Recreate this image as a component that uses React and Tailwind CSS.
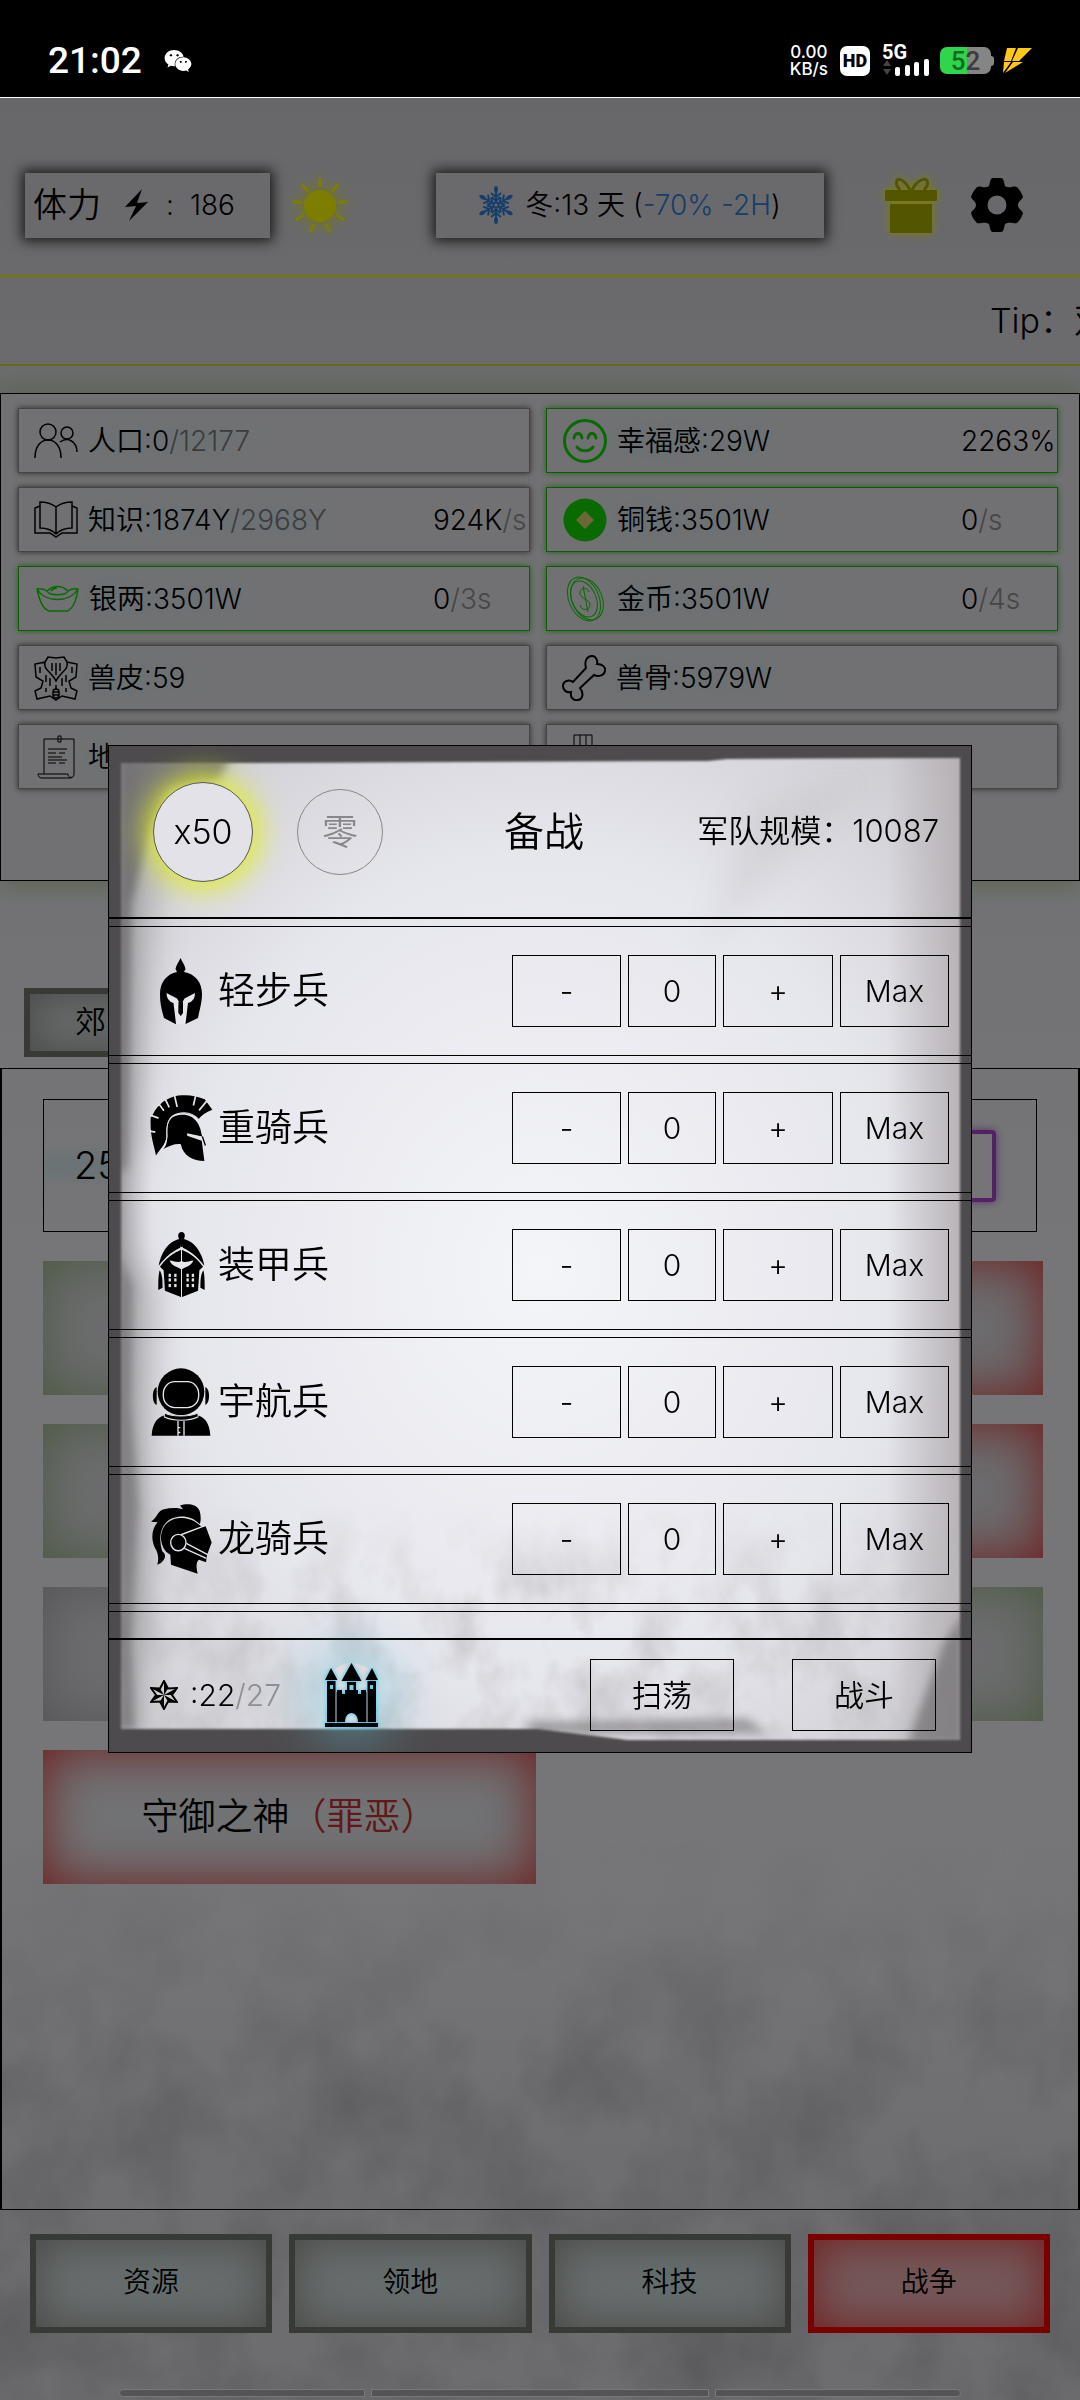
import React from 'react';
import { FaWeixin } from 'react-icons/fa';

const LightInfantryIcon = () => (
  <svg viewBox="0 0 42 66" className="w-[42px] h-[66px]" aria-hidden="true">
    <path d="M20.500 0C22 4 25 7 25.500 11L24 14C35 16 42 24 42 36C42 44 40 50 38 60L25.500 66H15.500L4 60C1 50 0 44 0 36C0 24 7 16 17 14L15.500 11C16 7 19 4 20.500 0Z" />
    <path fill="#e6e6ec" d="M6.500 35L17 40.500L19 44L18.500 54L20.500 57.500L23 54L22.500 44L24.500 40.500L35 35C35 41 32 44 28 45L25.500 66H16L13.500 45C10 44 6.500 41 6.500 35Z" />
    <path d="M18.500 44H23V55L20.800 58L18.500 55Z" />
  </svg>
);

const HeavyCavalryIcon = () => (
  <svg viewBox="150 96 190 188" preserveAspectRatio="none" className="w-[63px] h-[66px]" aria-hidden="true">
    <path d="M168 268C160 230 150 215 152 160C156 155 160 150 165 140C175 128 185 118 195 112C215 100 235 96 252 97C270 96 290 99 315 108L338 138C318 145 305 155 296 165C280 148 255 143 230 150C205 158 197 180 200 215C198 235 185 245 168 268Z" />
    <path d="M190 250C203 240 203 215 202 200C200 165 220 152 248 152C285 152 302 180 306 210L308 214L262 205V212L306 226L314 284C280 283 250 270 243 236C225 234 210 240 190 250Z" />
    <path d="M308 214L317 240" stroke="#000" strokeWidth="4" />
    <path d="M150 153L176 162M176 120L192 141M195 106L208 131M224 98L232 130M288 96L281 126M324 110L298 140M150 199L166 202" stroke="#e6e6ec" strokeWidth="5" />
    <path d="M296 165C280 148 255 143 230 150C205 158 199 180 201 215C199 235 190 245 184 252" fill="none" stroke="#e6e6ec" strokeWidth="3" />
  </svg>
);

const ArmoredIcon = () => (
  <svg viewBox="175 481 142 188" preserveAspectRatio="none" className="w-[47px] h-[66px]" aria-hidden="true">
    <path d="M243 500C210 505 185 535 177 577C195 555 215 538 242 526Z" />
    <path d="M249 500C282 505 307 535 315 577C297 555 277 538 250 526Z" />
    <path d="M246 531C225 541 203 550 181 580L192 590L196 648L246 667L296 648L300 590L311 580C289 550 267 541 246 531Z" />
    <path d="M180 590C190 605 188 625 189 640L176 646C176 620 176 605 180 590ZM312 590C302 605 304 625 303 640L316 646C316 620 316 605 312 590Z" />
    <path d="M246 481C254 481 258 488 255 496L249 524H243L237 496C234 488 238 481 246 481Z" />
    <path d="M246 527V667" stroke="#e6e6ec" strokeWidth="3" />
    <g fill="#e6e6ec">
      <path d="M210 562C225 563 236 571 246 563C256 571 267 563 282 562C276 577 260 580 246 587C232 580 216 577 210 562Z" />
      {[600, 613, 629].map((y) => (
        <g key={y}>
          <rect x="207" y={y} width="7" height="9" />
          <rect x="224" y={y} width="7" height="9" />
          <rect x="261" y={y} width="7" height="9" />
          <rect x="277" y={y} width="7" height="9" />
        </g>
      ))}
    </g>
  </svg>
);

const AstronautIcon = () => (
  <svg viewBox="156 860 180 194" preserveAspectRatio="none" className="w-[60px] h-[68px]" aria-hidden="true">
    <ellipse cx="246" cy="928" rx="70" ry="67" />
    <path d="M173 915C158 918 158 962 173 965ZM319 915C334 918 334 962 319 965Z" />
    <rect x="193" y="899" width="106" height="74" rx="34" fill="none" stroke="#e6e6ec" strokeWidth="4" />
    <path d="M158 1053C160 1015 178 998 200 994C225 1012 268 1012 292 994C315 998 332 1015 334 1053Z" />
    <path d="M196 988C220 1000 272 1000 297 988V1000C270 1012 222 1012 196 1000Z" stroke="#e6e6ec" strokeWidth="3" />
    <path d="M237 1011V1053M255 1011V1053M237 1030H244M237 1044H244" stroke="#e6e6ec" strokeWidth="4" />
  </svg>
);

const DragoonIcon = () => (
  <svg viewBox="156 1242 183 196" preserveAspectRatio="none" className="w-[61px] h-[70px]" aria-hidden="true">
    <path d="M156 1292C175 1280 175 1262 195 1257C215 1252 235 1252 252 1257L243 1246C265 1240 300 1240 304 1270C306 1285 305 1292 302 1298C275 1272 235 1272 210 1287C183 1305 178 1340 190 1375C207 1385 195 1405 175 1412C180 1395 178 1380 168 1365C155 1340 158 1310 176 1293Z" />
    <path d="M186 1335C188 1295 220 1280 250 1281C275 1282 295 1293 308 1306L320 1304L338 1350L324 1385L321 1405L300 1398C290 1405 292 1420 296 1437L216 1412L214 1384C195 1375 186 1355 186 1335Z" />
    <g fill="none" stroke="#e6e6ec" strokeWidth="4">
      <circle cx="238" cy="1350" r="23" />
      <path d="M246 1328L320 1302M262 1352L326 1384M256 1366L322 1394" />
    </g>
  </svg>
);

const CastleIcon = () => (
  <svg viewBox="0 0 53 64" className="w-[53px] h-[64px] drop-shadow-[0_0_2px_#22c4ee]" aria-hidden="true">
    <path d="M26.500 0L36.500 18H16.500ZM6 5L12.500 17H0ZM47 5L53 17H40.500Z" />
    <path fillRule="evenodd" d="M2 18H10.500V29H12V27H17V31H20V27H22V19H31V27H33V31H36V27H41V29H42.500V18H51V59H33C33 47 20 47 20 59H2ZM5 22V26H8V22ZM45 22V26H48V22ZM24.500 22V27H28.500V22Z" />
    <path d="M11 29V59M42 29V59" stroke="#bcd8e2" strokeWidth="1" />
    <rect y="60" width="53" height="4" />
  </svg>
);

const StarIcon = () => (
  <svg viewBox="0 0 28 30" className="w-[28px] h-[30px]" aria-hidden="true">
    <path d="M14 1L18 8.500L27 8L22 15L27 22L18 21.500L14 29L10 21.500L1 22L6 15L1 8L10 8.500Z" fill="none" stroke="#000" strokeWidth="2" />
    <path d="M14 15V1L18 8.500ZM14 15L27 8L22 15ZM14 15L27 22L18 21.500ZM14 15V29L10 21.500ZM14 15L1 22L6 15ZM14 15L1 8L10 8.500Z" />
  </svg>
);

const SunIcon = () => (
  <svg viewBox="0 0 56 56" className="w-[56px] h-[56px] drop-shadow-[0_0_6px_#f0f000]" aria-hidden="true">
    <circle cx="28" cy="29" r="16" fill="#fbfb00" />
    <g stroke="#fbfb00" strokeWidth="3">
      {[0, 40, 80, 120, 160, 200, 240, 280, 320].map((a) => (
        <path key={a} d="M28 1V10" transform={`rotate(${a} 28 29)`} />
      ))}
    </g>
  </svg>
);

const SnowIcon = () => (
  <svg viewBox="0 0 34 38" className="mr-3 w-[34px] h-[38px]" fill="none" stroke="#2e7bd6" strokeWidth="2" aria-hidden="true">
    {[0, 60, 120, 180, 240, 300].map((a) => (
      <g key={a} transform={`rotate(${a} 17 19)`}>
        <path d="M17 16V5M12 7L17 11L22 7M13 11L17 15L21 11" />
        <ellipse cx="17" cy="3.500" rx="2" ry="3.500" fill="#2e7bd6" stroke="none" />
      </g>
    ))}
    <circle cx="17" cy="19" r="2.500" />
  </svg>
);

const GiftIcon = () => (
  <svg viewBox="0 0 52 56" className="w-[52px] h-[56px] drop-shadow-[0_0_4px_#ffff00]" aria-hidden="true">
    <path d="M25 13C18 0 9 -1 12 9L15 13M27 13C34 0 45 -1 42 9L39 13" fill="none" stroke="#a8aa00" strokeWidth="3" />
    <rect y="13" width="52" height="11" rx="1" fill="#a8aa00" />
    <rect x="5" y="27" width="42" height="29" rx="1" fill="#a8aa00" />
  </svg>
);

const GearIcon = () => (
  <svg viewBox="0 0 52 54" className="w-[52px] h-[54px]" aria-hidden="true">
    <path fillRule="evenodd" d="M22 0H30C33 0 33 5 34 8C38 11 43 7 46 9C49 12 51 16 52 19C51 22 47 23 47 27C47 31 51 32 52 35C51 39 49 42 46 45C43 46 38 43 34 46C33 49 33 54 30 54H22C19 54 19 49 18 46C14 43 9 46 6 45C3 42 1 39 0 35C1 32 5 31 5 27C5 23 1 22 0 19C1 16 3 12 6 9C9 7 14 11 18 8C19 5 19 0 22 0ZM26 17.500A9.500 9.500 0 1 0 26 36.500A9.500 9.500 0 1 0 26 17.500Z" />
  </svg>
);

const ResourceIcon = ({ children }) => (
  <svg viewBox="0 0 44 46" className="w-[44px] h-[46px] shrink-0" fill="none" stroke="currentColor" strokeWidth="1.5" aria-hidden="true">
    {children}
  </svg>
);

const icons = {
  people: (
    <ResourceIcon>
      <circle cx="14" cy="14" r="8" />
      <circle cx="33" cy="15" r="6" />
      <path d="M1 40C1 28 7 22 14 22S27 28 27 40M26 24C34 18 43 24 43 34" />
    </ResourceIcon>
  ),
  happy: (
    <ResourceIcon>
      <circle cx="22" cy="23" r="20.500" strokeWidth="3" />
      <path d="M11 20C12 14 18 14 19 20M25 20C26 14 32 14 33 20M14 29C18 34 26 34 30 29" strokeWidth="3" strokeLinecap="round" />
    </ResourceIcon>
  ),
  book: (
    <ResourceIcon>
      <path d="M22 10C17 6 11 5 6 5V31C12 31 18 33 22 37C26 33 32 31 38 31V5C33 5 27 6 22 10ZM22 10V37M6 9L1 11V36H16L22 40L28 36H43V11L38 9" />
    </ResourceIcon>
  ),
  copper: (
    <ResourceIcon>
      <circle cx="22" cy="23" r="21.500" fill="currentColor" stroke="none" />
      <path d="M22 14L31 23L22 32L13 23Z" fill="#d8d070" stroke="none" />
    </ResourceIcon>
  ),
  ingot: (
    <ResourceIcon>
      <path d="M2 13C4 23 8 33 14 35H32C38 33 42 23 43 13C39 12 36 13 33 15C27 9 18 9 12 15C9 13 6 12 2 13ZM2 13C10 27 35 27 43 13M12 15C14 20 31 20 33 15M16 15C18 12 20 12 22 12" />
    </ResourceIcon>
  ),
  gold: (
    <ResourceIcon>
      <g strokeWidth="1">
        <ellipse cx="21" cy="23" rx="15" ry="23" transform="rotate(-24 21 23)" />
        <ellipse cx="24" cy="23" rx="15" ry="22" transform="rotate(-24 24 23)" />
        <ellipse cx="21" cy="23" rx="12" ry="19" transform="rotate(-24 21 23)" />
        <path d="M26 16C24 10 16 12 17 18C18 23 27 23 27 29C27 35 18 35 17 29M20 10L25 36" />
      </g>
    </ResourceIcon>
  ),
  hide: (
    <ResourceIcon>
      <path d="M11 7L14 2L22 3L30 2L33 7L43 9L42 22L35 26L37 33L43 36L41 44L28 41L22 45L16 41L3 44L1 36L7 33L9 26L2 22L1 9ZM11 7C9 15 18 17 22 26C26 17 35 15 33 7M18 8V16M22 8V20M26 8V16M12 20V27M16 23V31M28 23V31M32 20V27M22 30V34M6 12V18M38 12V18M12 33V37M32 33V37" />
      <rect x="19" y="34" width="6" height="9" rx="3" />
      <path d="M19 37H25M19 40H25" />
    </ResourceIcon>
  ),
  bone: (
    <ResourceIcon>
      <path d="M24 13C22 6 25 1 30 1C34 1 36 6 35 9C40 9 44 12 43 16C42 21 36 22 32 20L18 33C22 38 21 44 16 45C11 46 8 42 9 37C4 38 1 35 1 31C1 26 7 24 11 27Z" strokeWidth="2" />
    </ResourceIcon>
  ),
  scroll: (
    <ResourceIcon>
      <path d="M10 40V5H40V40C40 43 38 44 36 44H8C5 44 4 42 4 40H34C34 43 36 44 38 43M24 2H27V8H24ZM14 15H33M14 19H22M25 19H31M14 23H28M14 26H33M14 29H22M25 29H31" strokeWidth="1" />
    </ResourceIcon>
  ),
  wood: (
    <ResourceIcon>
      <path d="M12 1H30V44H12ZM18 1V44M24 1V44" strokeWidth="1" />
    </ResourceIcon>
  ),
};

const resources = [
  { icon: 'people', name: '人口', value: '0', max: '/12177' },
  { icon: 'happy', name: '幸福感', value: '29W', rate: '2263%', full: true },
  { icon: 'book', name: '知识', value: '1874Y', max: '/2968Y', rate: '924K', unit: '/s' },
  { icon: 'copper', name: '铜钱', value: '3501W', rate: '0', unit: '/s', full: true },
  { icon: 'ingot', name: '银两', value: '3501W', rate: '0', unit: '/3s', full: true },
  { icon: 'gold', name: '金币', value: '3501W', rate: '0', unit: '/4s', full: true },
  { icon: 'hide', name: '兽皮', value: '59' },
  { icon: 'bone', name: '兽骨', value: '5979W' },
  { icon: 'scroll', name: '地' },
  { icon: 'wood' },
];

const soldiers = [
  { name: '轻步兵', icon: <LightInfantryIcon /> },
  { name: '重骑兵', icon: <HeavyCavalryIcon /> },
  { name: '装甲兵', icon: <ArmoredIcon /> },
  { name: '宇航兵', icon: <AstronautIcon /> },
  { name: '龙骑兵', icon: <DragoonIcon /> },
];

const StatusBar = () => (
  <div className="flex h-[97px] shrink-0 items-center bg-black pt-6 pl-12 pr-12 text-white font-['Roboto',sans-serif]">
    <span className="text-[37px] leading-[40px] font-medium">21:02</span>
    <FaWeixin className="ml-[22px] size-[28px]" />
    <div className="ml-auto flex items-center">
      <div className="text-center text-[17px] leading-[17px] font-medium font-['Inter',sans-serif]">
        <div className="h-[17px]">0.00</div>
        <div className="h-[17px]">KB/s</div>
      </div>
      <div className="ml-3 flex h-[30px] w-[30px] items-center justify-center rounded-[7px] bg-white text-[18px] leading-none font-black text-black">HD</div>
      <div className="ml-3 w-[48px]">
        <div className="text-[20px] leading-[14px] font-bold">5G</div>
        <svg viewBox="0 0 48 17" className="h-[17px] w-[48px]" fill="#fff" aria-hidden="true">
          <path d="M1 7L5 1L9 7ZM1 10H9L5 16Z" fill="#444" />
          <rect x="13" y="8" width="5" height="9" rx="2" />
          <rect x="23" y="6" width="5" height="11" rx="2" />
          <rect x="32" y="3" width="5" height="14" rx="2" />
          <rect x="42" y="0" width="5" height="17" rx="2" />
        </svg>
      </div>
      <div className="ml-[10px] flex h-[27px] w-[51px] items-center justify-center rounded-[7px] bg-[linear-gradient(90deg,#2fd64c_53%,#858585_53%)] text-[26px] leading-none font-medium">
        <span className="text-[#146b25]">5</span>
        <span className="text-[#3c3c3c]">2</span>
      </div>
      <div className="h-[10px] w-[3px] rounded-r bg-[#858585]" />
      <svg viewBox="0 0 30 26" className="ml-2 h-[26px] w-[30px]" fill="#ffc818" aria-hidden="true">
        <path d="M5 0H14L9 13H2ZM16 0H30L17 13H10ZM2 14H9L1 25ZM11 14H21L3 25Z" />
      </svg>
    </div>
  </div>
);

const Header = () => (
  <header className="flex h-[179px] items-center border-b-2 border-[#f0f000] pl-[25px] pr-[57px] pt-[38px] pb-px">
    <button className="flex h-[65px] w-[245px] shrink-0 items-center bg-[#d4d4d9] pl-2 text-[28px] shadow-[0_0_12px_3px_#333]">
      <span className="text-[34px] leading-none">体力</span>
      <svg viewBox="0 0 23 32" className="ml-6 h-[32px] w-[23px]" aria-hidden="true">
        <path d="M17 0L0 18L11 17L4 32L23 13L12 14Z" />
      </svg>
      <span className="ml-[18px]">:</span>
      <span className="ml-4">186</span>
    </button>
    <span className="ml-[22px]"><SunIcon /></span>
    <div className="ml-auto flex h-[65px] w-[388px] shrink-0 items-center justify-center bg-[#d4d4d9] text-[28px] shadow-[0_0_12px_3px_#333]">
      <SnowIcon />
      <span>冬:13 天 (<span className="text-[#2e7bd6]">-70% -2H</span>)</span>
    </div>
    <button className="ml-[61px]" aria-label="礼物"><GiftIcon /></button>
    <button className="ml-[34px]" aria-label="设置"><GearIcon /></button>
  </header>
);

const Resource = ({ item }) => (
  <div
    className={
      item.full
        ? 'flex h-[65px] min-w-0 items-center border border-[#22b010] pl-4 text-[28px] whitespace-nowrap shadow-[0_0_6px_#40c030]'
        : 'flex h-[65px] min-w-0 items-center border border-[#888] pl-[15px] text-[28px] whitespace-nowrap shadow-[0_0_6px_#555]'
    }
  >
    <span className={item.full ? 'text-[#10d400]' : 'text-black'}>{icons[item.icon]}</span>
    <div className="ml-[10px] flex-1 [text-shadow:0_0_24px_#b4e8f0]">
      {item.name && (item.value ? `${item.name}:${item.value}` : item.name)}
      <span className="text-[#78787c]">{item.max}</span>
    </div>
    {item.rate && (
      <div className="w-[96px]">
        {item.rate}
        <span className="text-[#8c8c90]">{item.unit}</span>
      </div>
    )}
  </div>
);

const Stages = () => (
  <main className="flex flex-1 flex-col gap-[29px] border-x-2 border-y border-black pl-[41px] pr-[35px] pt-[30px]">
    <div className="mr-[6px] flex h-[133px] items-center justify-between border border-black bg-[radial-gradient(ellipse_at_12%_50%,#cbe4ea,transparent_25%)] pl-[30px] pr-[40px] text-[38px]">
      <span>25</span>
      <span className="h-[72px] w-[80px] rounded border-4 border-[#a844c8] shadow-[0_0_8px_#b060d0]" />
    </div>
    <div className="grid grid-cols-2 gap-x-[14px] gap-y-[29px]">
      <div className="h-[134px] bg-[#d8d8dc] shadow-[inset_0_0_54px_#94b080]" />
      <div className="h-[134px] bg-[#d8d8dc] shadow-[inset_0_0_54px_#d83838]" />
      <div className="h-[134px] bg-[#d8d8dc] shadow-[inset_0_0_54px_#94b080]" />
      <div className="h-[134px] bg-[#d8d8dc] shadow-[inset_0_0_54px_#d83838]" />
      <div className="h-[134px] bg-[#d8d8dc] shadow-[inset_0_0_54px_#a8a8ae]" />
      <div className="h-[134px] bg-[#d8d8dc] shadow-[inset_0_0_54px_#94b080]" />
      <button className="h-[134px] bg-[#e2e6ea] text-[37px] shadow-[inset_0_0_54px_#d83838]">
        守御之神<span className="text-[#c03030]">（罪恶）</span>
      </button>
    </div>
  </main>
);

const tabs = ['资源', '领地', '科技', '战争'];

const BottomNav = () => (
  <nav className="flex h-[190px] shrink-0 flex-col justify-between pt-6 pb-[3px]">
    <div className="grid grid-cols-4 gap-[17px] px-[30px]">
      {tabs.map((tab) => (
        <button
          key={tab}
          className={
            tab === '战争'
              ? 'h-[99px] border-6 border-[#f40000] bg-[#e8b0b4] pb-1 text-[28px] shadow-[inset_0_0_44px_#e04040]'
              : 'h-[99px] border-6 border-[#70766a] bg-[#d0d8d8] pb-1 text-[28px] shadow-[inset_0_0_44px_#8c908c] [text-shadow:0_0_24px_#b4e8f0]'
          }
        >
          {tab}
        </button>
      ))}
    </div>
    <div className="mx-auto flex h-2 w-[842px] gap-[6px]">
      <span className="w-[246px] rounded-l border border-[#f0f0f4] bg-[#a8a8ac]" />
      <span className="flex-1 border border-[#f0f0f4] bg-[#a8a8ac]" />
      <span className="w-[246px] rounded-r border border-[#f0f0f4] bg-[#a8a8ac]" />
    </div>
  </nav>
);

// faint ink wash along the bottom of the page
const PageInk = () => (
  <svg viewBox="0 0 1080 560" preserveAspectRatio="none" className="absolute inset-x-0 bottom-0 -z-10 h-[560px] w-full" aria-hidden="true">
    <defs>
      <filter id="pageNoise" x="0" y="0" width="100%" height="100%">
        <feTurbulence type="fractalNoise" baseFrequency="0.011 0.009" numOctaves="4" seed="8" />
        <feColorMatrix values="0 0 0 0 0.4  0 0 0 0 0.4  0 0 0 0 0.42  1.4 0 0 0 -0.5" />
      </filter>
      <linearGradient id="fadeDown" x2="0" y2="1">
        <stop offset="0" stopColor="#fff" stopOpacity="0" />
        <stop offset="0.4" stopColor="#fff" stopOpacity="0.8" />
        <stop offset="1" stopColor="#fff" />
      </linearGradient>
      <mask id="pageFade"><rect width="1080" height="560" fill="url(#fadeDown)" /></mask>
    </defs>
    <g mask="url(#pageFade)"><rect width="1080" height="560" filter="url(#pageNoise)" /></g>
  </svg>
);

// ink wash painted behind the dialog
const InkBackground = () => (
  <svg viewBox="0 0 864 1008" preserveAspectRatio="none" className="absolute inset-0 h-full w-full" aria-hidden="true">
    <defs>
      <radialGradient id="paper" cx="50%" cy="52%" r="75%">
        <stop offset="0" stopColor="#f4f5f8" />
        <stop offset="0.55" stopColor="#e6e6ed" />
        <stop offset="1" stopColor="#c6c4c9" />
      </radialGradient>
      <linearGradient id="sideRight">
        <stop offset="0" stopColor="#b4aeb2" stopOpacity="0" />
        <stop offset="1" stopColor="#b4aeb2" stopOpacity="0.9" />
      </linearGradient>
      <linearGradient id="sideLeft">
        <stop offset="0" stopColor="#88868a" stopOpacity="0.8" />
        <stop offset="1" stopColor="#b4b2b8" stopOpacity="0" />
      </linearGradient>
      <filter id="edge"><feGaussianBlur stdDeviation="1" /></filter>
      <filter id="soft" x="-50%" y="-50%" width="200%" height="200%"><feGaussianBlur stdDeviation="5" /></filter>
      <filter id="softer" x="-50%" y="-50%" width="200%" height="200%"><feGaussianBlur stdDeviation="14" /></filter>
      <filter id="noise" x="0" y="0" width="100%" height="100%">
        <feTurbulence type="fractalNoise" baseFrequency="0.02 0.014" numOctaves="4" seed="5" />
        <feColorMatrix values="0 0 0 0 0.5  0 0 0 0 0.5  0 0 0 0 0.52  2 0 0 0 -0.8" />
      </filter>
      <linearGradient id="noiseFade" x2="0" y2="1">
        <stop offset="0" stopColor="#fff" stopOpacity="0" />
        <stop offset="0.4" stopColor="#fff" stopOpacity="0.7" />
        <stop offset="1" stopColor="#fff" stopOpacity="0.8" />
      </linearGradient>
      <mask id="noiseMask"><rect y="760" width="864" height="248" fill="url(#noiseFade)" /></mask>
    </defs>
    <rect width="864" height="1008" fill="url(#paper)" />
    <rect x="780" width="74" height="1008" fill="url(#sideRight)" />
    <rect x="10" width="34" height="1008" fill="url(#sideLeft)" />
    <g mask="url(#noiseMask)"><rect y="760" width="864" height="248" filter="url(#noise)" /></g>
    <g filter="url(#softer)" fill="#9a9a9c">
      <path d="M10 10H130L80 60L50 150L30 400L10 420Z" opacity="0.5" />
      <path d="M10 500L50 540L44 700L50 800L20 1000H10Z" opacity="0.5" />
      <path d="M640 60L760 30L600 200Z" opacity="0.15" />
    </g>
    <g filter="url(#soft)" fill="#605e60">
      <path d="M10 10H122L110 34L60 44L40 90L22 160L18 420L10 430Z" opacity="0.7" />
      <path d="M10 510L24 540L22 660L30 760L22 900L26 985H10Z" opacity="0.55" />
      <path d="M856 870L836 900L800 1000H856Z" opacity="0.6" />
      <path d="M420 978L640 974L660 990H420Z" opacity="0.5" />
    </g>
    <path filter="url(#edge)" d="M-4 -4H868V1012H-4V985H430L520 996H853V12L620 13L600 15L130 17H12V985H-4Z" fill="#4d4c4d" />
  </svg>
);

const boxClass = 'h-[72px] border border-black text-center text-[30px]';

const SoldierRow = ({ soldier }) => (
  <li className="flex h-[130px] shrink-0 items-center border-y border-black pl-10 pr-[22px]">
    <span className="flex w-[64px] shrink-0 items-center justify-center">{soldier.icon}</span>
    <span className="ml-[5px] text-[37px]">{soldier.name}</span>
    <div className="ml-auto flex gap-[7px]">
      <button className={`${boxClass} w-[109px]`}>-</button>
      <input className={`${boxClass} w-[88px]`} aria-label={soldier.name} defaultValue="0" />
      <button className={`${boxClass} w-[110px]`}>+</button>
      <button className={`${boxClass} w-[109px]`}>Max</button>
    </div>
  </li>
);

const BattleDialog = () => (
  <section role="dialog" aria-label="备战" className="absolute top-[647px] left-1/10 w-4/5 border border-black">
    <InkBackground />
    <div className="relative flex flex-col overflow-hidden">
      <header className="flex h-[173px] items-center border-b-2 border-black pl-[44px] pr-[32px]">
        <button className="size-[100px] rounded-full border border-[#555] bg-[#e2e2e8] text-[34px] shadow-[0_0_30px_6px_#e0ee28]">x50</button>
        <button className="ml-[44px] size-[86px] rounded-full border border-[#888] text-[36px] text-[#88888c]">零</button>
        <h2 className="ml-[121px] text-[40px]">备战</h2>
        <span className="ml-auto text-[31px]">军队规模：10087</span>
      </header>
      <ul className="flex h-[719px] flex-col gap-[7px] overflow-hidden pt-[7px]">
        {soldiers.map((s) => (
          <SoldierRow key={s.name} soldier={s} />
        ))}
        <li className="h-[130px] shrink-0 border-t border-black" />
      </ul>
      <footer className="flex h-[114px] items-center border-t-2 border-black pl-[41px] pr-[35px] pb-[2px] text-[30px]">
        <StarIcon />
        <span className="ml-3">:22<span className="text-[#8e8e94]">/27</span></span>
        <button className="ml-[44px] rounded-full shadow-[0_0_50px_18px_#60c8dc60]" aria-label="城堡"><CastleIcon /></button>
        <button className="ml-auto h-[72px] w-[144px] border border-black">扫荡</button>
        <button className="ml-[58px] h-[72px] w-[144px] border border-black">战斗</button>
      </footer>
    </div>
  </section>
);

const App = () => {
  return (
    <div className="flex min-h-screen flex-col bg-black font-[350] text-black font-['Inter','Noto_Sans_CJK_SC',sans-serif]">
      <StatusBar />
      <div className="relative isolate flex flex-1 flex-col overflow-hidden border-t border-[#fff] bg-[linear-gradient(180deg,#cfcfd3,#e0e0e6_25%,#ececf0_50%,#ececf0_78%,#dcdce2_90%,#dadae0)]">
        <PageInk />
        <Header />
        <div className="h-[89px] border-b-2 border-[#d0d028]">
          <div className="ml-auto w-[90px] overflow-hidden pt-[18px] text-[34px] whitespace-nowrap">Tip：双</div>
        </div>
        <section className="mt-[27px] grid h-[488px] shrink-0 grid-cols-2 content-start gap-x-[16px] gap-y-[14px] border border-black bg-[#e2e2e6] pt-[14px] pl-[17px] pr-[21px] shadow-[0_0_26px_2px_#a8c490]">
          {resources.map((item) => (
            <Resource key={item.icon} item={item} />
          ))}
        </section>
        <div className="flex h-[187px] shrink-0 items-end pb-[11px] pl-6">
          <button className="h-[69px] w-[242px] border-6 border-[#70766a] bg-[#d0d6d6] text-[31px] shadow-[inset_0_0_40px_#8c908c]">
            <span className="block pl-[45px] text-left">郊</span>
          </button>
        </div>
        <Stages />
        <BottomNav />
        <div className="absolute inset-0 bg-black/50" />
        <BattleDialog />
      </div>
    </div>
  );
};

export default App;
